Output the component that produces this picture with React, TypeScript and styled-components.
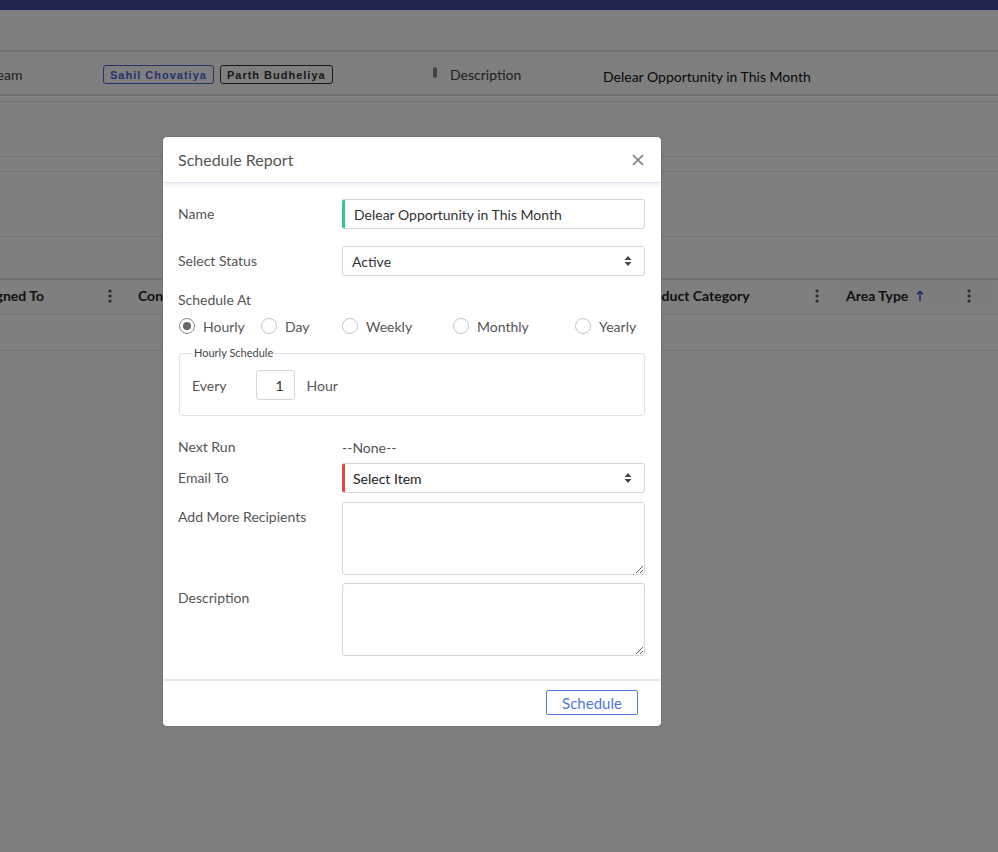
import React from "react";
import styled, { createGlobalStyle } from "styled-components";

const GlobalStyle = createGlobalStyle`
  html, body {
    margin: 0;
    padding: 0;
    background: #ffffff;
    font-family: "Lato", "Noto Sans", sans-serif;
    color: #333;
  }
  * { box-sizing: border-box; }
`;

const Page = styled.div`
  position: relative;
  width: 998px;
  height: 852px;
  overflow: hidden;
  background: #fff;
`;

const TopBar = styled.div`
  height: 10px;
  background: #3c4ca0;
`;

const PageHeader = styled.div`
  height: 42px;
  background: #ffffff;
  border-bottom: 2px solid #e8e8e8;
`;

const InfoRow = styled.div`
  height: 44px;
  display: flex;
  align-items: center;
  padding-top: 3px;
  border-bottom: 2px solid #e6e6e6;
  font-size: 14px;
  color: #333;
`;

const InfoLabel = styled.div<{ $w: number; $ml?: number }>`
  width: ${(p) => p.$w}px;
  margin-left: ${(p) => p.$ml ?? 0}px;
  flex-shrink: 0;
  color: #444;
`;

const Chips = styled.div`
  display: flex;
  gap: 6px;
  width: 330px;
  flex-shrink: 0;
`;

const Chip = styled.span<{ $color: string }>`
  display: inline-flex;
  align-items: center;
  height: 19px;
  padding: 0 6px;
  border: 1px solid ${(p) => p.$color};
  border-radius: 3px;
  color: ${(p) => p.$color};
  font-family: "Liberation Sans", Arial, sans-serif;
  font-weight: 700;
  font-size: 11px;
  letter-spacing: 1px;
`;

const Grip = styled.span`
  width: 4px;
  height: 11px;
  border-radius: 2px;
  background: #888;
  margin: -4px 13px 0 0;
  flex-shrink: 0;
`;

const InfoValue = styled.div`
  color: #111;
  margin-top: 3px;
`;

const Panel = styled.div<{ $h: number; $mt: number }>`
  height: ${(p) => p.$h}px;
  margin-top: ${(p) => p.$mt}px;
  border-top: 1px solid #e4e4e4;
  border-bottom: 1px solid #e4e4e4;
`;

const TableHead = styled.div`
  height: 37px;
  margin-top: 41px;
  padding-bottom: 3px;
  display: flex;
  align-items: stretch;
  border-top: 2px solid #e2e2e2;
  border-bottom: 1px solid #e6e6e6;
  font-size: 14px;
  font-weight: 700;
  color: #222;
`;

const HeadCell = styled.div<{ $w: number; $pr?: number; $active?: boolean }>`
  width: ${(p) => p.$w}px;
  flex-shrink: 0;
  display: flex;
  align-items: center;
  justify-content: space-between;
  padding: 0 ${(p) => p.$pr ?? 13}px 0 13px;
  background: ${(p) => (p.$active ? "#fafafa" : "#fff")};
`;

const HeadTitle = styled.span`
  display: flex;
  align-items: center;
  gap: 8px;
  white-space: nowrap;
`;

const TableRow = styled.div`
  height: 36px;
  border-bottom: 1px solid #e6e6e6;
`;

const Overlay = styled.div`
  position: absolute;
  inset: 0;
  background: rgba(0, 0, 0, 0.5);
`;

const Modal = styled.div`
  position: absolute;
  left: 163px;
  top: 137px;
  width: 498px;
  background: #fff;
  border-radius: 4px;
  display: flex;
  flex-direction: column;
  box-shadow: 0 0 2px rgba(0, 0, 0, 0.3);
`;

const ModalHeader = styled.div`
  height: 46px;
  display: flex;
  align-items: center;
  justify-content: space-between;
  padding: 0 16px 0 15px;
  border-bottom: 1px solid #e4e4f0;
  box-shadow: 0 2px 3px rgba(120, 120, 170, 0.12);
`;

const Title = styled.h5`
  margin: 0;
  font-size: 16px;
  font-weight: 400;
  color: #555;
`;

const CloseButton = styled.button`
  border: none;
  background: none;
  padding: 0;
  width: 14px;
  height: 14px;
  display: flex;
  cursor: pointer;
`;

const ModalBody = styled.div`
  padding: 16px 16px 23px 15px;
  display: flex;
  flex-direction: column;
`;

const FormRow = styled.div<{ $mt?: number; $align?: string }>`
  display: flex;
  align-items: ${(p) => p.$align ?? "center"};
  margin-top: ${(p) => p.$mt ?? 0}px;
`;

const Label = styled.label<{ $pt?: number }>`
  width: 164px;
  flex-shrink: 0;
  font-size: 14px;
  color: #555;
  line-height: 20px;
  padding-top: ${(p) => p.$pt ?? 0}px;
`;

const TextInput = styled.input<{ $accent: string }>`
  flex: 1;
  height: 30px;
  border: 1px solid #d5d5e2;
  border-left: 3px solid ${(p) => p.$accent};
  border-radius: 3px;
  padding: 0 9px;
  font-family: inherit;
  font-size: 14px;
  color: #333;
  outline: none;
`;

const SelectBox = styled.div<{ $accent?: string }>`
  flex: 1;
  height: 30px;
  display: flex;
  align-items: center;
  justify-content: space-between;
  border: 1px solid #d5d5e2;
  border-left: ${(p) => (p.$accent ? `3px solid ${p.$accent}` : "1px solid #d5d5e2")};
  border-radius: 3px;
  padding: 0 12px 0 ${(p) => (p.$accent ? 8 : 9)}px;
  font-size: 14px;
  color: ${(p) => (p.$accent ? "#222" : "#333")};
`;

const SectionLabel = styled.div`
  font-size: 14px;
  color: #555;
  line-height: 20px;
  margin-top: 14px;
`;

const RadioGroup = styled.div`
  display: grid;
  grid-template-columns: 82px 81px 111px 122px auto;
  margin-top: 6px;
  height: 20px;
  align-items: center;
`;

const RadioOption = styled.label`
  display: flex;
  align-items: center;
  gap: 8px;
  font-size: 14px;
  color: #555;
  white-space: nowrap;
`;

const RadioCircle = styled.span<{ $checked?: boolean }>`
  width: 16px;
  height: 16px;
  border-radius: 50%;
  border: 1px solid ${(p) => (p.$checked ? "#888" : "#c4c4d4")};
  display: flex;
  align-items: center;
  justify-content: center;
  margin-left: 1px;
  &::after {
    content: "";
    width: 8px;
    height: 8px;
    border-radius: 50%;
    background: ${(p) => (p.$checked ? "#666" : "transparent")};
  }
`;

const Fieldset = styled.fieldset`
  margin: 10px 0 0 1px;
  padding: 10px 12px 15px 12px;
  border: 1px solid #e2e2ec;
  border-radius: 3px;
  min-width: 0;
`;

const Legend = styled.legend`
  font-size: 11px;
  line-height: 14px;
  color: #444;
  padding: 0 1px;
  margin-left: 1px;
`;

const FieldsetInner = styled.div`
  display: flex;
  align-items: center;
  height: 30px;
  font-size: 14px;
  color: #555;
`;

const NumberBox = styled.input`
  width: 39px;
  height: 30px;
  margin: 0 12px 0 29px;
  border: 1px solid #d5d5e2;
  border-radius: 3px;
  text-align: right;
  padding: 0 10px;
  font-family: inherit;
  font-size: 14px;
  color: #333;
  outline: none;
`;

const NoneText = styled.span`
  font-size: 14px;
  color: #555;
`;

const TextArea = styled.textarea`
  flex: 1;
  height: 73px;
  border: 1px solid #d5d5e2;
  border-radius: 3px;
  font-family: inherit;
  font-size: 14px;
  outline: none;
`;

const ModalFooter = styled.div`
  height: 47px;
  display: flex;
  align-items: center;
  justify-content: flex-end;
  padding: 0 23px 2px;
  border-top: 2px solid #e6e6f2;
`;

const ScheduleButton = styled.button`
  height: 25px;
  width: 92px;
  border: 1px solid #4f78e0;
  border-radius: 2px;
  background: #fff;
  color: #4f78e0;
  font-family: inherit;
  font-size: 15px;
  line-height: 22px;
  padding: 0;
  cursor: pointer;
`;

const Kebab = () => (
  <svg width="4" height="14" viewBox="0 0 4 14">
    <circle cx="2" cy="2" r="1.6" fill="#555" />
    <circle cx="2" cy="7" r="1.6" fill="#555" />
    <circle cx="2" cy="12" r="1.6" fill="#555" />
  </svg>
);

const UpArrow = () => (
  <svg width="8" height="12" viewBox="0 0 8 12">
    <path d="M4 1 L1 4.5 M4 1 L7 4.5 M4 1 V11" stroke="#3b5bd6" strokeWidth="1.5" fill="none" />
  </svg>
);

const SortCaret = () => (
  <svg width="8" height="12" viewBox="0 0 8 12">
    <path d="M0.5 5 L4 1 L7.5 5 Z" fill="#444" />
    <path d="M0.5 7 L4 11 L7.5 7 Z" fill="#444" />
  </svg>
);

const CloseIcon = () => (
  <svg width="14" height="14" viewBox="0 0 14 14">
    <path d="M2 2 L12 12 M12 2 L2 12" stroke="#777" strokeWidth="1.6" />
  </svg>
);

const radios = [
  { label: "Hourly", checked: true },
  { label: "Day" },
  { label: "Weekly" },
  { label: "Monthly" },
  { label: "Yearly" },
];

export default function App() {
  return (
    <Page>
      <GlobalStyle />
      <TopBar />
      <PageHeader />
      <InfoRow>
        <InfoLabel $w={113} $ml={-10}>Team</InfoLabel>
        <Chips>
          <Chip $color="#4a64d8">Sahil Chovatiya</Chip>
          <Chip $color="#333">Parth Budheliya</Chip>
        </Chips>
        <Grip />
        <InfoLabel $w={153}>Description</InfoLabel>
        <InfoValue>Delear Opportunity in This Month</InfoValue>
      </InfoRow>
      <Panel $h={56} $mt={5} />
      <Panel $h={66} $mt={14} />
      <TableHead>
        <HeadCell $w={168} style={{ marginLeft: -43 }}>
          <HeadTitle>Assigned To</HeadTitle>
          <Kebab />
        </HeadCell>
        <HeadCell $w={502}>
          <HeadTitle>Contact Name</HeadTitle>
          <Kebab />
        </HeadCell>
        <HeadCell $w={206} $pr={14}>
          <HeadTitle>Product Category</HeadTitle>
          <Kebab />
        </HeadCell>
        <HeadCell $w={160} $pr={22} $active>
          <HeadTitle>
            Area Type <UpArrow />
          </HeadTitle>
          <Kebab />
        </HeadCell>
      </TableHead>
      <TableRow />
      <Overlay />
      <Modal>
        <ModalHeader>
          <Title>Schedule Report</Title>
          <CloseButton aria-label="Close">
            <CloseIcon />
          </CloseButton>
        </ModalHeader>
        <ModalBody>
          <FormRow>
            <Label>Name</Label>
            <TextInput $accent="#2ec98f" defaultValue="Delear Opportunity in This Month" />
          </FormRow>
          <FormRow $mt={17}>
            <Label>Select Status</Label>
            <SelectBox>
              Active <SortCaret />
            </SelectBox>
          </FormRow>
          <SectionLabel>Schedule At</SectionLabel>
          <RadioGroup>
            {radios.map((r) => (
              <RadioOption key={r.label}>
                <RadioCircle $checked={r.checked} />
                {r.label}
              </RadioOption>
            ))}
          </RadioGroup>
          <Fieldset>
            <Legend>Hourly Schedule</Legend>
            <FieldsetInner>
              Every
              <NumberBox defaultValue="1" />
              Hour
            </FieldsetInner>
          </Fieldset>
          <FormRow $mt={21}>
            <Label>Next Run</Label>
            <NoneText>--None--</NoneText>
          </FormRow>
          <FormRow $mt={6}>
            <Label>Email To</Label>
            <SelectBox $accent="#e8453c">
              Select Item <SortCaret />
            </SelectBox>
          </FormRow>
          <FormRow $mt={9} $align="flex-start">
            <Label $pt={5}>Add More Recipients</Label>
            <TextArea />
          </FormRow>
          <FormRow $mt={8} $align="flex-start">
            <Label $pt={5}>Description</Label>
            <TextArea />
          </FormRow>
        </ModalBody>
        <ModalFooter>
          <ScheduleButton>Schedule</ScheduleButton>
        </ModalFooter>
      </Modal>
    </Page>
  );
}
